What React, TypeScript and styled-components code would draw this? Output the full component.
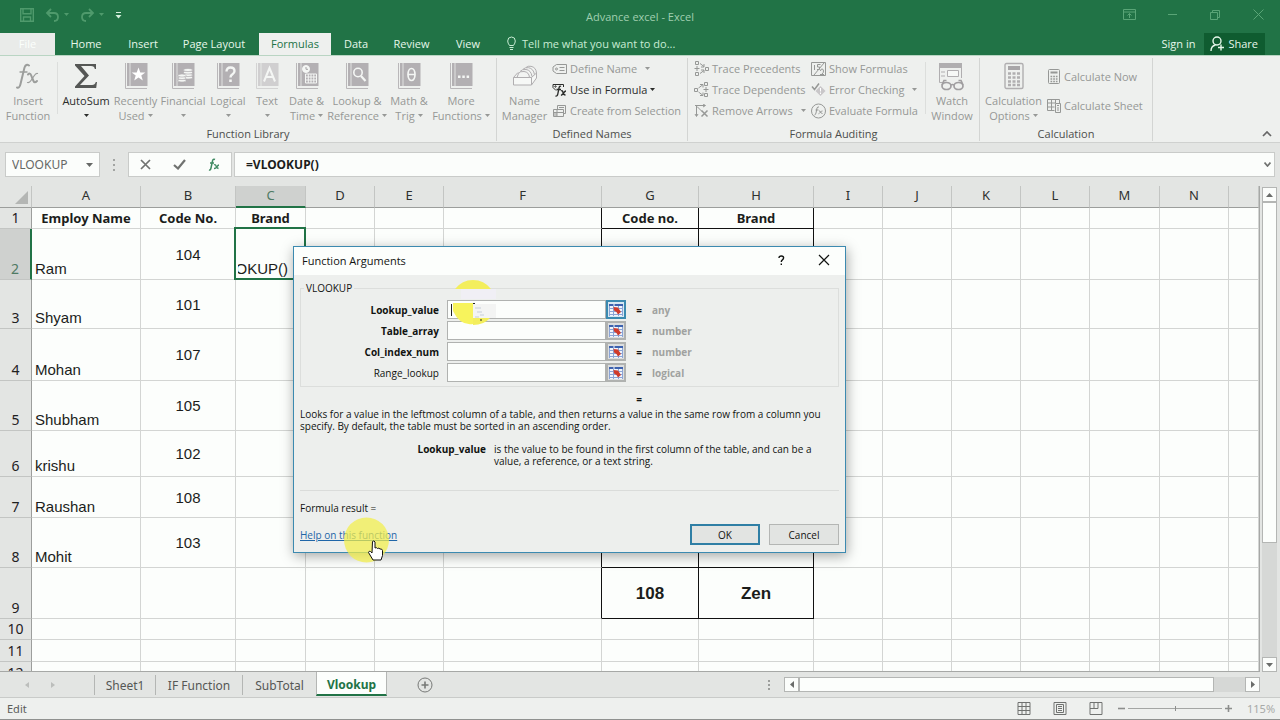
import React from "react";
import styled, { createGlobalStyle, css } from "styled-components";

const UI = `"Noto Sans", "Open Sans", sans-serif`;
const CHROME = `"Open Sans", "Noto Sans", sans-serif`;
const CELL = `"Liberation Sans", Arial, sans-serif`;
const GREEN = "#217346";

const GlobalStyle = createGlobalStyle`
  * { box-sizing: border-box; }
  body { margin: 0; font-family: ${UI}; font-size: 12px; color: #333; }
  button, input, select { font: inherit; color: inherit; margin: 0; padding: 0; border: 0; background: none; border-radius: 0; }
  svg { display: block; flex: none; }
`;

const Window = styled.div`
  position: relative;
  display: flex;
  flex-direction: column;
  height: 100vh;
  overflow: hidden;
  background: #e3e5e3;
`;

/* ---------- title bar ---------- */

const TitleBar = styled.header`
  display: grid;
  grid-template-columns: 1fr auto 1fr;
  align-items: center;
  height: 33px;
  flex: none;
  background: ${GREEN};
  color: #a0cfb0;
`;

const QuickAccess = styled.div`
  display: flex;
  align-items: center;
  gap: 4px;
  padding: 0 0 4px 20px;
  color: #4f9a6c;
`;

const DocTitle = styled.h1`
  margin: 0;
  font-family: ${CHROME};
  font-size: 11px;
  font-weight: 400;
`;

const IconButton = styled.button`
  display: flex;
  align-items: center;
  justify-content: center;
`;

const SpacedIconButton = styled(IconButton)<{ $bright?: boolean }>`
  margin-left: 7px;
  ${(p) => p.$bright && css`color: #d5f0dd;`}
`;

const WindowControls = styled.div`
  display: flex;
  justify-content: flex-end;
  align-items: center;
  gap: 29px;
  padding: 0 15px 4px 0;
  color: #5aa577;

  button { width: 14px; }
`;

/* ---------- ribbon tabs ---------- */

const TabRow = styled.nav`
  display: flex;
  align-items: stretch;
  height: 22px;
  flex: none;
  background: ${GREEN};
  font-family: ${CHROME};
  font-size: 11px;
  color: #e6f7ea;

  button { padding-bottom: 2px; }
`;

const RibbonTab = styled.button<{ $w: number; $kind?: "file" | "active" }>`
  width: ${(p) => p.$w}px;
  white-space: nowrap;
  ${(p) => p.$kind === "file" && css`background: #e9ebe9; color: #fbfffc;`}
  ${(p) => p.$kind === "active" && css`background: #eef0ee; color: ${GREEN};`}
`;

const TellMe = styled.button`
  display: flex;
  align-items: center;
  gap: 6px;
  padding-left: 13px;
  color: #c9ecd4;
`;

const Account = styled.div`
  display: flex;
  margin-left: auto;
  padding-right: 15px;
  gap: 9px;
`;

const ShareButton = styled.button`
  display: flex;
  align-items: center;
  gap: 3px;
  padding: 0 7px 0 6px;
  background: #0f5c30;
`;

/* ---------- ribbon ---------- */

const Ribbon = styled.section`
  position: relative;
  display: flex;
  height: 88px;
  flex: none;
  padding: 2px 0 1px;
  background: #eef0ee;
  border-top: 1px solid #b9d5c3;
  border-bottom: 1px solid #cfd1cf;
  font-family: ${CHROME};
  font-size: 11px;
`;

const Group = styled.div<{ $w: number }>`
  display: flex;
  flex-direction: column;
  width: ${(p) => p.$w}px;
  border-right: 1px solid #d3d5d3;
`;

const GroupBody = styled.div`
  display: flex;
  flex: none;
  height: 68px;
`;

const GroupCaption = styled.div`
  text-align: center;
  line-height: 15px;
  color: #4c4e4c;
`;

const Divider = styled.span`
  width: 1px;
  height: 52px;
  margin: 4px 2px 0 1px;
  background: #dcdedc;
`;

const BigTool = styled.button<{ $w: number; $on?: boolean }>`
  display: flex;
  flex-direction: column;
  align-items: center;
  width: ${(p) => p.$w}px;
  padding-top: 3px;
  line-height: 15px;
  white-space: nowrap;
  color: ${(p) => (p.$on ? "#2b2d2b" : "#969896")};
`;

const BigIcon = styled.span`
  display: flex;
  align-items: center;
  justify-content: center;
  height: 30px;
  margin-bottom: 2px;
`;

const ToolLine = styled.span`
  display: flex;
  align-items: center;
  gap: 3px;
  height: 15px;
`;

const ToolColumn = styled.div<{ $w: number; $top?: number; $left?: number }>`
  display: flex;
  flex-direction: column;
  width: ${(p) => p.$w}px;
  padding: ${(p) => p.$top ?? 0}px 0 0 ${(p) => p.$left ?? 0}px;
`;

const SmallTool = styled.button<{ $h?: number; $on?: boolean }>`
  display: flex;
  align-items: center;
  gap: 3px;
  height: ${(p) => p.$h ?? 21}px;
  white-space: nowrap;
  color: ${(p) => (p.$on ? "#2b2d2b" : "#969896")};
`;

const CaretSlot = styled.span<{ $wide?: boolean }>`
  margin-left: ${(p) => (p.$wide ? 5 : 0)}px;
`;

const CollapseButton = styled(IconButton)`
  margin: auto 8px 4px auto;
  color: #666;
`;

/* ---------- formula bar ---------- */

const FormulaBar = styled.section`
  display: flex;
  align-items: flex-start;
  height: 43px;
  flex: none;
  padding: 9px 5px 0;
`;

const NameBox = styled.label`
  display: flex;
  align-items: center;
  width: 95px;
  height: 25px;
  padding: 0 6px;
  background: #fbfdfb;
  border: 1px solid #c9cbc9;
  color: #666866;

  select { appearance: none; width: 78px; outline: 0; }
`;

const Grip = styled.span`
  width: 28px;
  height: 25px;
  display: flex;
  align-items: center;
  justify-content: center;
  color: #a2a4a2;
`;

const EntryTools = styled.div`
  display: flex;
  align-items: center;
  justify-content: space-around;
  width: 104px;
  height: 25px;
  background: #fbfdfb;
  border: 1px solid #c9cbc9;
  color: #707270;
`;

const FxButton = styled(IconButton)`
  color: #3f8a62;
`;

const FormulaField = styled.label`
  display: flex;
  align-items: center;
  flex: 1;
  height: 25px;
  margin-left: 2px;
  padding: 0 3px 0 11px;
  background: #fbfdfb;
  border: 1px solid #c9cbc9;
  color: #707270;

  input { flex: 1; outline: 0; font-weight: 700; color: #1b1d1b; }
`;

/* ---------- sheet ---------- */

const SheetArea = styled.main`
  display: flex;
  flex: 1;
  min-height: 0;
`;

const GridViewport = styled.div`
  flex: 1;
  min-width: 0;
  overflow: hidden;
  border-right: 1px solid #a6a8a6;
  border-bottom: 1px solid #a6a8a6;
`;

const Grid = styled.table`
  width: 100%;
  table-layout: fixed;
  border-collapse: separate;
  border-spacing: 0;
  background: #fcfefc;

  th, td { padding: 0; }
`;

const ColHead = styled.th<{ $on?: boolean }>`
  height: 22px;
  font-size: 13px;
  line-height: 19px;
  font-weight: 400;
  vertical-align: top;
  color: ${(p) => (p.$on ? "#4f7a64" : "#2f312f")};
  background: ${(p) => (p.$on ? "#cfd1cf" : "#e3e5e3")};
  border-right: 1px solid #c3c5c3;
  border-bottom: ${(p) => (p.$on ? `2px solid ${GREEN}` : "1px solid #9c9e9c")};
`;

const Corner = styled(ColHead)`
  svg { margin: 5px 3px 0 auto; }
`;

const RowHead = styled.th<{ $on?: boolean }>`
  font-size: 14px;
  line-height: 20px;
  font-weight: 400;
  vertical-align: bottom;
  color: ${(p) => (p.$on ? "#4f7a64" : "#1f211f")};
  background: ${(p) => (p.$on ? "#cfd1cf" : "#e3e5e3")};
  border-right: ${(p) => (p.$on ? `2px solid ${GREEN}` : "1px solid #9c9e9c")};
  border-bottom: 1px solid #c3c5c3;
`;

type CellKind = "name" | "code" | "head" | "big";

const Cell = styled.td<{ $kind?: CellKind; $rb?: boolean; $bb?: boolean }>`
  font-family: ${CELL};
  font-size: 15px;
  line-height: 17px;
  color: #1b1d1b;
  white-space: nowrap;
  border-right: 1px solid ${(p) => (p.$rb ? "#111" : "#d3d5d3")};
  border-bottom: 1px solid ${(p) => (p.$bb ? "#111" : "#d3d5d3")};
  ${(p) => p.$kind === "name" && css`&& { padding: 0 0 2px 3px; } vertical-align: bottom;`}
  ${(p) => p.$kind === "code" && css`text-align: center; vertical-align: middle;`}
  ${(p) => p.$kind === "big" && css`text-align: center; font-size: 17px; font-weight: 700;`}
  ${(p) => p.$kind === "head" && css`
    text-align: center; font-family: ${UI}; font-size: 13px; font-weight: 700;
  `}
`;

const ActiveCell = styled(Cell)`
  position: relative;
  vertical-align: bottom;

  &::after {
    content: "";
    position: absolute;
    inset: -2px -1px -1px -2px;
    border: 2px solid ${GREEN};
  }
`;

const EditText = styled.div`
  display: flex;
  justify-content: flex-end;
  overflow: hidden;
  margin: 0 17px 2px 2px;
`;

const VScroll = styled.div`
  display: flex;
  flex-direction: column;
  width: 20px;
  padding: 1px 3px 0 2px;
`;

const ScrollArrow = styled.button`
  display: flex;
  align-items: center;
  justify-content: center;
  width: 15px;
  height: 15px;
  flex: none;
  background: #fbfdfb;
  border: 1px solid #b4b6b4;
  color: #6a6c6a;
`;

const VTrack = styled.div`
  flex: 1;
  width: 15px;
  background: #d6d8d6;
`;

const VThumb = styled.div`
  height: 75%;
  background: #fcfefc;
  border: 1px solid #b4b6b4;
`;

/* ---------- sheet tabs ---------- */

const SheetBar = styled.nav`
  display: flex;
  height: 26px;
  flex: none;
  border-bottom: 1px solid #c9cbc9;
  color: #555755;
`;

const SheetNav = styled.div`
  display: flex;
  align-items: center;
  gap: 22px;
  width: 94px;
  padding-left: 25px;
  color: #bcbebc;
`;

const SheetTab = styled.button<{ $w: number; $on?: boolean }>`
  width: ${(p) => p.$w}px;
  height: 20px;
  margin-top: 3px;
  border-left: 1px solid #b4b6b4;
  ${(p) => p.$on && css`
    height: 24px;
    margin-top: 0;
    padding-top: 2px;
    background: #fcfefc;
    border-right: 1px solid #b4b6b4;
    border-bottom: 2px solid ${GREEN};
    font-weight: 700;
    color: ${GREEN};
  `}
`;

const AddSheet = styled(IconButton)`
  margin-left: 30px;
  color: #777977;
`;

const HScroll = styled.div`
  display: flex;
  align-items: center;
  width: 40%;
  margin-left: auto;
  padding-right: 20px;
`;

const HTrack = styled.div`
  flex: 1;
  height: 15px;
  background: #d6d8d6;
`;

const HThumb = styled.div`
  width: 93%;
  height: 15px;
  background: #fcfefc;
  border: 1px solid #b4b6b4;
`;

/* ---------- status bar ---------- */

const StatusBar = styled.footer`
  display: flex;
  align-items: center;
  height: 22px;
  flex: none;
  padding: 0 5px 0 7px;
  background: #eef0ee;
  border-bottom: 1px solid #8f918f;
  font-size: 11px;
  color: #5a5c5a;
`;

const ViewButtons = styled.div`
  display: flex;
  gap: 22px;
  margin: 0 15px 0 auto;
  color: #707270;
`;

const Zoom = styled.div`
  display: flex;
  align-items: center;
  gap: 3px;
  color: #8c8e8c;

  output { width: 28px; margin-left: 12px; color: #a8aaa8; }
`;

const ZoomRange = styled.input`
  appearance: none;
  width: 94px;
  height: 9px;
  background: linear-gradient(#a4a6a4, #a4a6a4) center / 100% 1px no-repeat;

  &::-webkit-slider-thumb { appearance: none; width: 1px; height: 5px; background: #8c8e8c; }
`;

/* ---------- dialog ---------- */

const Dialog = styled.form`
  position: absolute;
  top: 246px;
  left: 293px;
  width: 553px;
  background: #edefed;
  border: 1px solid #3c8ab0;
  box-shadow: 1px 3px 12px rgba(0, 0, 0, 0.35);
  font-family: ${CHROME};
  font-size: 10px;
  color: #111311;
`;

const DialogTitle = styled.div`
  display: flex;
  align-items: center;
  height: 28px;
  padding: 0 15px 2px 8px;
  background: #fcfefc;
  gap: 33px;

  h2 { margin: 0 auto 0 0; font-size: 11px; font-weight: 400; }
`;

const DialogBody = styled.div`
  padding: 6px 6px 7px;
`;

const Args = styled.fieldset`
  display: grid;
  gap: 2px;
  margin: 0;
  padding: 5px 0 4px;
  border: 1px solid #dcdedc;

  legend { margin-left: 3px; padding: 0 2px; line-height: 14px; }
`;

const ArgRow = styled.div<{ $optional?: boolean }>`
  display: grid;
  grid-template-columns: 138px 8px 159px 20px 26px 1fr;
  align-items: center;
  height: 19px;

  label { text-align: right; font-weight: ${(p) => (p.$optional ? 400 : 700)}; }
`;

const ArgInput = styled.input`
  grid-column: 3;
  height: 19px;
  padding: 0 3px;
  background: #fcfefc;
  border: 1px solid #b0b2b0;
  outline: 0;
`;

const PickButton = styled.button<{ $on?: boolean }>`
  display: flex;
  align-items: center;
  justify-content: center;
  height: 19px;
  background: ${(p) => (p.$on ? "#d8e8f2" : "#dcdedf")};
  border: ${(p) => (p.$on ? "2px solid #3c8ab0" : "2px solid #b0b2b0")};
`;

const Equals = styled.span`
  text-align: center;
  font-weight: 700;
`;

const ArgType = styled.span`
  font-weight: 700;
  color: #a0a2a0;
`;

const ResultRow = styled.div`
  display: grid;
  grid-template-columns: 326px 26px 1fr;
  height: 21px;
  padding-top: 2px;
  align-items: center;
`;

const Description = styled.p`
  margin: 0;
  line-height: 12px;
`;

const ArgHelp = styled.dl`
  display: grid;
  grid-template-columns: 186px 340px;
  gap: 8px;
  margin: 11px 0 0;
  padding-bottom: 23px;
  border-bottom: 1px solid #dadcda;
  line-height: 12px;

  dt { text-align: right; font-weight: 700; }
  dd { margin: 0; }
`;

const FormulaResult = styled.div`
  padding-top: 9px;
  line-height: 16px;
`;

const DialogFooter = styled.div`
  display: flex;
  align-items: center;
  gap: 9px;
  margin-top: 8px;

  a { margin-right: auto; color: #1f66a8; }
`;

const DialogButton = styled.button<{ $primary?: boolean }>`
  width: 70px;
  height: 21px;
  background: #e2e4e2;
  border: ${(p) => (p.$primary ? "2px solid #2f7fa5" : "1px solid #b4b6b4")};
`;

const Pointer = styled.div<{ $x: number; $y: number }>`
  position: absolute;
  left: ${(p) => p.$x}px;
  top: ${(p) => p.$y}px;
  pointer-events: none;
`;

/* ---------- drawings ---------- */

type SvgProps = { w: number; h: number; children: React.ReactNode; stroke?: number };
const Svg = ({ w, h, children, stroke = 1 }: SvgProps) => (
  <svg width={w} height={h} viewBox={`0 0 ${w} ${h}`} fill="none" stroke="currentColor" strokeWidth={stroke} aria-hidden="true">
    {children}
  </svg>
);

const Caret = () => (
  <Svg w={5} h={3}><path d="M0 0h5L2.5 3z" fill="currentColor" stroke="none" /></Svg>
);

const Book = ({ children, pale }: { children: React.ReactNode; pale?: boolean }) => (
  <Svg w={24} h={28}>
    <g opacity={pale ? 0.5 : 1}>
      <path d="M1.500 1v25.500M1.500 26.500H23" stroke="#b9b7b9" />
      <path d="M3 1h20.500v23H3z" fill="#b3b0b3" stroke="none" />
      <path d="M6 1v23" stroke="#eef0ee" strokeWidth={0.8} />
    </g>
    <g stroke="#f4f6f4">{children}</g>
  </Svg>
);

const bigIcons = {
  fx: (
    <Svg w={24} h={28}>
      <g stroke="#9c9e9c" strokeLinecap="round">
        <path d="M13 3.500q-3-2-4.500 2L4.500 22q-1 4.500-3.500 3.500" strokeWidth={2} />
        <path d="M4 10h7" strokeWidth={1.400} />
        <path d="M12 12.500q2-2 3 .5l2.500 6q1 2.500 3.500 0" strokeWidth={2} />
        <path d="M21.500 11.500q-1.500-.5-3.500 2.500l-3 4.500q-1.500 2.500-3.500 2" strokeWidth={1.200} />
      </g>
    </Svg>
  ),
  sum: (
    <Svg w={24} h={28}>
      <path d="M1 2h21v5h-1.200Q20.500 4 17 4H7l8 9.500L6 23h12q3 0 3.800-3H23l-.8 6H1v-1.500l9.500-10.500L1 3.500z" fill="#555755" stroke="none" />
    </Svg>
  ),
  recent: (
    <Book><path d="M14.500 5.500l1.800 5h5l-4 3 1.500 5-4.300-3-4.300 3 1.500-5-4-3h5z" fill="#fff" stroke="none" /></Book>
  ),
  financial: (
    <Book>
      <g fill="#f4f6f4" stroke="#b3b0b3" strokeWidth={0.7}>
        <ellipse cx="17" cy="15.500" rx="4.500" ry="1.600" /><ellipse cx="17" cy="13" rx="4.500" ry="1.600" />
        <ellipse cx="17" cy="10.500" rx="4.500" ry="1.600" /><ellipse cx="17" cy="8" rx="4.500" ry="1.600" />
        <ellipse cx="11" cy="18.500" rx="4" ry="1.600" /><ellipse cx="11" cy="16" rx="4" ry="1.600" />
        <ellipse cx="11" cy="13.500" rx="4" ry="1.600" />
      </g>
    </Book>
  ),
  logical: (
    <Book>
      <path d="M10.500 9.500q0-4 4-4t4 3.500q0 2-2 3.200t-2 3.300" strokeWidth={2.400} />
      <path d="M13.200 17.500h2.600v2.500h-2.600z" fill="#f4f6f4" stroke="none" />
    </Book>
  ),
  text: (
    <Book pale><path d="M9 19.500l5.500-13.500 5.500 13.500M11 15h7" strokeWidth={2} /></Book>
  ),
  date: (
    <Book>
      <circle cx="11" cy="7" r="3.500" fill="#f4f6f4" />
      <path d="M11 5v2.300h2" stroke="#a5a3a5" />
      <path d="M10.500 12h11v9h-11zM10.500 15h11M10.500 18h11M13.300 12v9M16 12v9M18.800 12v9" />
    </Book>
  ),
  lookup: (
    <Book>
      <circle cx="13" cy="10.500" r="4.200" strokeWidth={1.600} />
      <path d="M16 14l4.500 5" strokeWidth={2.200} />
    </Book>
  ),
  math: (
    <Book>
      <ellipse cx="14.500" cy="12.500" rx="3.500" ry="6" strokeWidth={1.700} />
      <path d="M11 12.500h7" strokeWidth={1.500} />
    </Book>
  ),
  more: (
    <Book><path d="M9 13.500h2.500v2.500H9zM13.300 13.500h2.500v2.500h-2.500zM17.600 13.500h2.500v2.500h-2.500z" fill="#f4f6f4" stroke="none" /></Book>
  ),
  names: (
    <Svg w={26} h={22}>
      <g stroke="#b0aeb0" strokeLinejoin="round">
        <path d="M1.500 12.500v7.500h18v-7.500zM1.500 12.500l4-4.500h3M19.500 12.500l5-4.500v5l-5 7" fill="#f6f8f6" />
        <path d="M5 12.500l1.500-4Q8 6 12 6.500q5 .5 5.500 6zM8 6.500Q10 4 14 4.500q5 .5 6 7M11 4.300Q13 2.200 16.500 2.700q5 .8 6 7M14 2.500Q16 .7 19 1.300q5 1 5.500 6.700" fill="#f2f4f2" />
      </g>
    </Svg>
  ),
  watch: (
    <Svg w={28} h={30}>
      <path d="M1 2h23v5H1z" fill="#b0aeb0" stroke="none" />
      <g stroke="#b0aeb0">
        <path d="M1.500 7v14.500h4M23.500 7v10M3 11h4M3 15h4" />
        <path d="M9.500 9.500h11v6h-11z" fill="#f6f8f6" />
      </g>
      <g stroke="#a09ea0" strokeWidth={1.700}>
        <ellipse cx="8.500" cy="25" rx="4.500" ry="3.500" fill="#eef0ee" /><ellipse cx="20.500" cy="25" rx="4.500" ry="3.500" fill="#eef0ee" />
        <path d="M13 24q1.500-1 3 0M4 24l2-4.500h2.500M25 24l-2-4.500h-2.500" />
      </g>
    </Svg>
  ),
  calc: (
    <Svg w={20} h={28}>
      <rect x="1" y="1.500" width="18" height="25" rx="1.500" stroke="#b0aeb0" strokeWidth={1.400} />
      <path d="M4 4h12v4H4z" fill="#a8a6a8" stroke="none" />
      <path d="M4 11.500h12M4 15.500h12M4 19.500h12M4 23h12" stroke="#b0aeb0" strokeWidth={2.500} strokeDasharray="3 1.500" />
    </Svg>
  ),
};

const smallIcons = {
  define: <Svg w={15} h={14}><path d="M4.500 2.500h10v9h-10L1 9V5z" /><circle cx="4.500" cy="7" r="1" /><path d="M7.500 5.500h5M7.500 8.500h5" /></Svg>,
  use: (
    <Svg w={15} h={14}>
      <path d="M4 7.500L1 4.500v-3h10.500v2.500" />
      <circle cx="3.500" cy="3.500" r=".7" />
      <path d="M9 3.500Q7.500 2.500 7 5l-1.200 6q-.5 2.500-2.300 2M4.500 6.500h4.500" strokeWidth={1.300} />
      <path d="M9 8q1.500-1 2 1.500t2.500 2.500M14 8q-1 0-2.500 2T9 12.500" strokeWidth={1.300} />
    </Svg>
  ),
  create: <Svg w={15} h={14}><path d="M1.500 5.500h10v7h-10zM1.500 8.500h10M5 5.500v7M5.500 5.500v-4h8v8h-2M7 3.500h5" /><path d="M2 9h3v3H2z" fill="currentColor" stroke="none" opacity=".5" /></Svg>,
  precedents: (
    <Svg w={15} h={15}>
      <path d="M1.500.5h3v3h-3zM1.500 11.500h3v3h-3zM11.500 6.500h3v3h-3zM.5 7.500h5M3 5v5M6 2.500l4 3M6 12.500l4-3" />
      <path d="M10 3v3H7M10 12V9H7" />
    </Svg>
  ),
  dependents: (
    <Svg w={15} h={15}>
      <path d="M.5 6.500h3v3h-3zM10.500.5h3v3h-3zM10.500 11.500h3v3h-3zM9.500 7.500h5M12 5v5M4.500 6l4-3M4.500 10l4 3" />
      <path d="M6 2.500h3v3M6 13.500h3v-3" />
    </Svg>
  ),
  remove: <Svg w={15} h={14}><path d="M1 1.500h10M9 0l2.500 1.500L9 3M2.500 2v10M1 10l1.500 2.500L4 10M3 2.500l5 5" /><path d="M7.500 6.500l6 6M13.500 6.500l-6 6" strokeWidth={1.500} /></Svg>,
  show: <Svg w={15} h={14}><path d="M.5.5h14v13H.5zM3.500 3v5M9.500 2.500h-3v2.500h2v2.500h-2.500M13 1L3 13M9.500 9q0-2 1.500-2t1.500 2-1.500 3M9 12.500h4" /></Svg>,
  error: <Svg w={15} h={14}><path d="M1 3.500l2.500 3L8 .5" strokeWidth={1.500} /><path d="M9.500 3l5 5-5 5-5-5z" fill="#c9c7c9" stroke="none" /><path d="M9.500 5v3.500M9.500 9.500v1.500" stroke="#fff" /></Svg>,
  evaluate: (
    <Svg w={15} h={16}>
      <circle cx="7.500" cy="8" r="7" />
      <path d="M3.500 12q1 0 1.500-2l1-5Q6.500 3.500 8 4M4.500 7h3M8 8q1-.5 1.500 1t2 1.500M11.500 8q-1 0-2 1.200t-2 1.600" />
    </Svg>
  ),
  now: <Svg w={14} h={16}><rect x="1.500" y=".5" width="11" height="14" rx="1" /><path d="M3.500 3.500h7" strokeWidth={2} /><path d="M3.500 7.500h7M3.500 10h7M3.500 12.500h7" strokeWidth={1.500} strokeDasharray="1.700 1" /></Svg>,
  sheet: <Svg w={14} h={15}><path d="M.5 1.500h12v4M.5 1.500v11h7M.5 5h8M.5 9h7M4.500 1.500v11M8.500 1.500V5" /><path d="M8.500 5.500h5v9h-5zM10 7.500h2M10 10h2M10 12h2" /></Svg>,
};

const RangeIcon = () => (
  <Svg w={14} h={12}>
    <path d="M0 0h14v12H0z" fill="#f1f5fb" stroke="none" />
    <path d="M0 1h4.500M5.500 1H14" stroke="#3d62ae" strokeWidth={2} />
    <path d="M0 4.500h14M0 7.500h14M0 10.500h14M.5 2v10M4.500 2v10M9.500 2v10M13.500 2v10" stroke="#8aa4d6" />
    <path d="M4.500 3l4.500.5L12 8l-3 2.500L7.500 8 5 6.500z" fill="#cf3b2c" stroke="none" />
  </Svg>
);

/* ---------- data ---------- */

type Big = { icon: keyof typeof bigIcons; w: number; a: string; b?: string; caret?: boolean; on?: boolean };
const library: Big[] = [
  { icon: "sum", w: 52, a: "AutoSum", caret: true, on: true },
  { icon: "recent", w: 47, a: "Recently", b: "Used", caret: true },
  { icon: "financial", w: 48, a: "Financial", caret: true },
  { icon: "logical", w: 42, a: "Logical", caret: true },
  { icon: "text", w: 36, a: "Text", caret: true },
  { icon: "date", w: 43, a: "Date &", b: "Time", caret: true },
  { icon: "lookup", w: 58, a: "Lookup &", b: "Reference", caret: true },
  { icon: "math", w: 46, a: "Math &", b: "Trig", caret: true },
  { icon: "more", w: 58, a: "More", b: "Functions", caret: true },
];

const columns: [string, number | undefined][] = [
  ["A", 109], ["B", 95], ["C", 70], ["D", 69], ["E", 69], ["F", 158], ["G", 97], ["H", 115],
  ["I", 69], ["J", 69], ["K", 69], ["L", 69], ["M", 70], ["N", 69], ["", undefined],
];

type Row = { h: number; cells?: Record<string, string>; head?: boolean };
const rows: Row[] = [
  { h: 21, head: true, cells: { A: "Employ Name", B: "Code No.", C: "Brand", G: "Code no.", H: "Brand" } },
  { h: 51, cells: { A: "Ram", B: "104", C: "=VLOOKUP()" } },
  { h: 49, cells: { A: "Shyam", B: "101" } },
  { h: 52, cells: { A: "Mohan", B: "107" } },
  { h: 50, cells: { A: "Shubham", B: "105" } },
  { h: 46, cells: { A: "krishu", B: "102" } },
  { h: 41, cells: { A: "Raushan", B: "108" } },
  { h: 50, cells: { A: "Mohit", B: "103" } },
  { h: 51, cells: { G: "108", H: "Zen" } },
  { h: 21 },
  { h: 22 },
  { h: 22 },
];

const args = [
  { name: "Lookup_value", type: "any" },
  { name: "Table_array", type: "number" },
  { name: "Col_index_num", type: "number" },
  { name: "Range_lookup", type: "logical", optional: true },
];

const kindOf = (col: string, head?: boolean): CellKind => {
  if (head) return "head";
  if (col === "A") return "name";
  return col === "B" ? "code" : "big";
};

const BigButton = ({ icon, w, a, b, caret, on }: Big) => (
  <BigTool type="button" $w={w} $on={on}>
    <BigIcon>{bigIcons[icon]}</BigIcon>
    <ToolLine>{a}</ToolLine>
    <ToolLine>{b}{caret && <Caret />}</ToolLine>
  </BigTool>
);

type Small = { icon: keyof typeof smallIcons; label: string; caret?: "near" | "wide"; on?: boolean; h?: number };
const SmallButton = ({ icon, label, caret, on, h }: Small) => (
  <SmallTool type="button" $on={on} $h={h}>
    {smallIcons[icon]}{label}
    {caret && <CaretSlot $wide={caret === "wide"}><Caret /></CaretSlot>}
  </SmallTool>
);

export default function App() {
  return (
    <Window>
      <GlobalStyle />
      <TitleBar>
        <QuickAccess>
          <IconButton aria-label="Save"><Svg w={14} h={14}><path d="M.7.7h12.600v12.600H.7zM3 .7v5h8v-5M3.500 13.300V9h7v4.300" strokeWidth={1.400} /></Svg></IconButton>
          <SpacedIconButton aria-label="Undo"><Svg w={15} h={14}><path d="M6 1L2 5l4 4M2 5h7q4 0 4 4t-4 4" strokeWidth={1.800} /></Svg></SpacedIconButton>
          <Caret />
          <SpacedIconButton aria-label="Redo"><Svg w={15} h={14}><path d="M9 1l4 4-4 4M13 5H6Q2 5 2 9t4 4" strokeWidth={1.800} /></Svg></SpacedIconButton>
          <Caret />
          <SpacedIconButton aria-label="Customize Quick Access Toolbar" $bright><Svg w={7} h={8}><path d="M1 1.500h5" /><path d="M.5 4h6l-3 3.500z" fill="currentColor" stroke="none" /></Svg></SpacedIconButton>
        </QuickAccess>
        <DocTitle>Advance excel - Excel</DocTitle>
        <WindowControls>
          <IconButton aria-label="Ribbon Display Options"><Svg w={13} h={11}><path d="M.5.5h12v10H.5zM.5 3h12M6.500 9V4.500M4.500 6.500l2-2 2 2" /></Svg></IconButton>
          <IconButton aria-label="Minimize"><Svg w={11} h={11}><path d="M1 5.500h9" /></Svg></IconButton>
          <IconButton aria-label="Restore"><Svg w={10} h={10}><path d="M.5 2.500h7v7h-7zM2.500 2.500v-2h7v7h-2" /></Svg></IconButton>
          <IconButton aria-label="Close"><Svg w={11} h={11}><path d="M.5.5l10 10M10.500.5l-10 10" /></Svg></IconButton>
        </WindowControls>
      </TitleBar>

      <TabRow>
        <RibbonTab $w={55} $kind="file">File</RibbonTab>
        <RibbonTab $w={62}>Home</RibbonTab>
        <RibbonTab $w={52}>Insert</RibbonTab>
        <RibbonTab $w={90}>Page Layout</RibbonTab>
        <RibbonTab $w={72} $kind="active">Formulas</RibbonTab>
        <RibbonTab $w={50}>Data</RibbonTab>
        <RibbonTab $w={61}>Review</RibbonTab>
        <RibbonTab $w={52}>View</RibbonTab>
        <TellMe>
          <Svg w={9} h={14}><path d="M2.500 9.500Q.7 7 .7 5q0-4 3.800-4t3.800 4q0 2-1.800 4.500zM2.500 11.500h4M3 13.500h3" /></Svg>
          Tell me what you want to do...
        </TellMe>
        <Account>
          <button>Sign in</button>
          <ShareButton>
            <Svg w={15} h={15}><circle cx="7" cy="5" r="4" strokeWidth={1.400} /><path d="M1 15q0-5 4.500-6M11 8.500v6M8 11.500h6" strokeWidth={1.400} /></Svg>
            Share
          </ShareButton>
        </Account>
      </TabRow>

      <Ribbon>
        <Group $w={497}>
          <GroupBody>
            <BigButton icon="fx" w={56} a="Insert" b="Function" />
            <Divider />
            {library.map((t) => <BigButton key={t.a} {...t} />)}
          </GroupBody>
          <GroupCaption>Function Library</GroupCaption>
        </Group>
        <Group $w={191}>
          <GroupBody>
            <BigButton icon="names" w={55} a="Name" b="Manager" />
            <ToolColumn $w={130}>
              <SmallButton icon="define" label="Define Name" caret="wide" />
              <SmallButton icon="use" label="Use in Formula" caret="near" on />
              <SmallButton icon="create" label="Create from Selection" />
            </ToolColumn>
          </GroupBody>
          <GroupCaption>Defined Names</GroupCaption>
        </Group>
        <Group $w={292}>
          <GroupBody>
            <ToolColumn $w={123} $left={6}>
              <SmallButton icon="precedents" label="Trace Precedents" />
              <SmallButton icon="dependents" label="Trace Dependents" />
              <SmallButton icon="remove" label="Remove Arrows" caret="wide" />
            </ToolColumn>
            <ToolColumn $w={113}>
              <SmallButton icon="show" label="Show Formulas" />
              <SmallButton icon="error" label="Error Checking" caret="wide" />
              <SmallButton icon="evaluate" label="Evaluate Formula" />
            </ToolColumn>
            <Divider />
            <BigButton icon="watch" w={48} a="Watch" b="Window" />
          </GroupBody>
          <GroupCaption>Formula Auditing</GroupCaption>
        </Group>
        <Group $w={173}>
          <GroupBody>
            <BigButton icon="calc" w={67} a="Calculation" b="Options" caret />
            <ToolColumn $w={104} $top={4}>
              <SmallButton icon="now" label="Calculate Now" h={29} />
              <SmallButton icon="sheet" label="Calculate Sheet" h={29} />
            </ToolColumn>
          </GroupBody>
          <GroupCaption>Calculation</GroupCaption>
        </Group>
        <CollapseButton aria-label="Collapse the Ribbon"><Svg w={10} h={6}><path d="M1 5l4-4 4 4" strokeWidth={1.700} /></Svg></CollapseButton>
      </Ribbon>

      <FormulaBar>
        <NameBox>
          <select aria-label="Name Box"><option>VLOOKUP</option></select>
          <Svg w={7} h={4}><path d="M0 0h7L3.500 4z" fill="currentColor" stroke="none" /></Svg>
        </NameBox>
        <Grip><Svg w={2} h={12}><path d="M1 0v12" strokeWidth={2} strokeDasharray="2 3" /></Svg></Grip>
        <EntryTools>
          <IconButton aria-label="Cancel entry"><Svg w={11} h={11}><path d="M1 1l9 9M10 1l-9 9" strokeWidth={1.700} /></Svg></IconButton>
          <IconButton aria-label="Enter"><Svg w={13} h={11}><path d="M1 6l4 3.500L12 1" strokeWidth={2.200} /></Svg></IconButton>
          <FxButton aria-label="Insert Function">
            <Svg w={12} h={13}><path d="M1 12q1.500.5 2-2l1.500-7Q5 .5 7 1.500M2 5h4" strokeWidth={1.500} /><path d="M6 7q1.500-1 2 1t2.500 2.500M11 7q-1 0-2.200 1.800T6 10.500" strokeWidth={1.300} /></Svg>
          </FxButton>
        </EntryTools>
        <FormulaField>
          <input aria-label="Formula" defaultValue="=VLOOKUP()" />
          <Svg w={7} h={5}><path d="M.5.5l3 3.500 3-3.500" strokeWidth={1.700} /></Svg>
        </FormulaField>
      </FormulaBar>

      <SheetArea>
        <GridViewport>
          <Grid>
            <colgroup>
              <col width={32} />
              {columns.map(([name, w]) => <col key={name} width={w} />)}
            </colgroup>
            <thead>
              <tr>
                <Corner aria-label="Select all"><Svg w={13} h={13}><path d="M13 0v13H0z" fill="#b4b6b4" stroke="none" /></Svg></Corner>
                {columns.map(([name]) => <ColHead key={name} $on={name === "C"}>{name}</ColHead>)}
              </tr>
            </thead>
            <tbody>
              {rows.map((row, r) => (
                <tr key={r} style={{ height: row.h }}>
                  <RowHead scope="row" $on={r === 1}>{r + 1}</RowHead>
                  {columns.map(([col]) => {
                    const text = row.cells?.[col];
                    if (r === 1 && col === "C") {
                      return <ActiveCell key={col}><EditText>{text}</EditText></ActiveCell>;
                    }
                    const boxed = r < 9;
                    const gh = col === "G" || col === "H";
                    return (
                      <Cell key={col} $kind={text ? kindOf(col, row.head) : undefined}
                        $rb={boxed && (gh || col === "F")} $bb={boxed && gh}>{text}</Cell>
                    );
                  })}
                </tr>
              ))}
            </tbody>
          </Grid>
        </GridViewport>
        <VScroll>
          <ScrollArrow aria-label="Scroll up"><Svg w={7} h={4}><path d="M0 4h7L3.500 0z" fill="currentColor" stroke="none" /></Svg></ScrollArrow>
          <VTrack><VThumb /></VTrack>
          <ScrollArrow aria-label="Scroll down"><Svg w={7} h={4}><path d="M0 0h7L3.500 4z" fill="currentColor" stroke="none" /></Svg></ScrollArrow>
        </VScroll>
      </SheetArea>

      <SheetBar>
        <SheetNav>
          <IconButton aria-label="Previous sheet"><Svg w={4} h={6}><path d="M4 0v6L0 3z" fill="currentColor" stroke="none" /></Svg></IconButton>
          <IconButton aria-label="Next sheet"><Svg w={4} h={6}><path d="M0 0v6l4-3z" fill="currentColor" stroke="none" /></Svg></IconButton>
        </SheetNav>
        <SheetTab $w={61}>Sheet1</SheetTab>
        <SheetTab $w={87}>IF Function</SheetTab>
        <SheetTab $w={74}>SubTotal</SheetTab>
        <SheetTab $w={71} $on>Vlookup</SheetTab>
        <AddSheet aria-label="New sheet"><Svg w={16} h={16}><circle cx="8" cy="8" r="7" /><path d="M8 4.500v7M4.500 8h7" strokeWidth={1.600} /></Svg></AddSheet>
        <HScroll>
          <Svg w={16} h={12}><path d="M1 1v12" strokeWidth={2} strokeDasharray="2 2" opacity=".5" /></Svg>
          <ScrollArrow aria-label="Scroll left"><Svg w={4} h={7}><path d="M4 0v7L0 3.500z" fill="currentColor" stroke="none" /></Svg></ScrollArrow>
          <HTrack><HThumb /></HTrack>
          <ScrollArrow aria-label="Scroll right"><Svg w={4} h={7}><path d="M0 0v7l4-3.500z" fill="currentColor" stroke="none" /></Svg></ScrollArrow>
        </HScroll>
      </SheetBar>

      <StatusBar>
        Edit
        <ViewButtons>
          <IconButton aria-label="Normal"><Svg w={14} h={13}><path d="M1 .5h12v12H1zM1 4.500h12M1 8.500h12M5 .5v12M9 .5v12" /></Svg></IconButton>
          <IconButton aria-label="Page Layout"><Svg w={14} h={13}><path d="M1 .5h12v12H1zM3.500 2.500h7v8h-7zM5 4.500h4M5 6.500h4M5 8.500h4" /></Svg></IconButton>
          <IconButton aria-label="Page Break Preview"><Svg w={14} h={13}><path d="M1 .5h12v12H1zM5 .5v6M1 6.500h8V.5" /></Svg></IconButton>
        </ViewButtons>
        <Zoom>
          <IconButton aria-label="Zoom out"><Svg w={7} h={7}><path d="M0 3.500h7" strokeWidth={1.600} /></Svg></IconButton>
          <ZoomRange type="range" aria-label="Zoom" />
          <IconButton aria-label="Zoom in"><Svg w={7} h={7}><path d="M0 3.500h7M3.500 0v7" strokeWidth={1.600} /></Svg></IconButton>
          <output>115%</output>
        </Zoom>
      </StatusBar>

      <Dialog aria-label="Function Arguments">
        <DialogTitle>
          <h2>Function Arguments</h2>
          <IconButton type="button" aria-label="Help">
            <Svg w={7} h={10}><path d="M1 3q0-2 2.300-2t2.300 1.800q0 1.200-1.200 2T3.300 7M3.300 8.500v1.500" strokeWidth={1.400} /></Svg>
          </IconButton>
          <IconButton type="button" aria-label="Close dialog"><Svg w={12} h={12}><path d="M1 1l10 10M11 1L1 11" strokeWidth={1.200} /></Svg></IconButton>
        </DialogTitle>
        <DialogBody>
          <Args>
            <legend>VLOOKUP</legend>
            {args.map((a, i) => (
              <ArgRow key={a.name} $optional={a.optional}>
                <label htmlFor={a.name}>{a.name}</label>
                <ArgInput id={a.name} />
                <PickButton type="button" aria-label={`Select range for ${a.name}`} $on={i === 0}><RangeIcon /></PickButton>
                <Equals>=</Equals>
                <ArgType>{a.type}</ArgType>
              </ArgRow>
            ))}
          </Args>
          <ResultRow><span /><Equals>=</Equals></ResultRow>
          <Description>
            Looks for a value in the leftmost column of a table, and then returns a value in the same row from a column you specify. By default, the table must be sorted in an ascending order.
          </Description>
          <ArgHelp>
            <dt>Lookup_value</dt>
            <dd>is the value to be found in the first column of the table, and can be a value, a reference, or a text string.</dd>
          </ArgHelp>
          <FormulaResult>Formula result =</FormulaResult>
          <DialogFooter>
            <a href="#help">Help on this function</a>
            <DialogButton type="button" $primary>OK</DialogButton>
            <DialogButton type="button">Cancel</DialogButton>
          </DialogFooter>
        </DialogBody>
      </Dialog>

      <Pointer $x={450} $y={279}>
        <Svg w={48} h={48}>
          <path d="M5 10Q12 1 23 1t18 9z" fill="#f3ee5c" stroke="none" />
          <path d="M11 10h35v10H11z" fill="#f1effa" stroke="none" opacity=".6" />
          <path d="M3 24h20v21Q10 47 3 32z" fill="#f7f35c" stroke="none" />
          <path d="M23 39h17q-6 7-17 7z" fill="#f3ee5c" stroke="none" />
          <path d="M23 25h23v14H23z" fill="#f3f4f3" stroke="none" />
          <path d="M25 29h6M27 33h5M30 36h4M25 38h4" stroke="#c5cdd8" />
          <path d="M23 24.500h2M30 41h2" stroke="#222" />
          <path d="M1.500 25v12" stroke="#222" />
        </Svg>
      </Pointer>
      <Pointer $x={343} $y={516}>
        <Svg w={48} h={48}>
          <circle cx="23.500" cy="24" r="22.500" fill="#f3ee4a" fillOpacity={0.72} stroke="none" />
          <path d="M29.500 25.500q1.500-1.500 2.500.5v6q1.500-1 2.500.5 1.500-1 2.500.5 2-.5 2.500 1.500v5l-1.500 4.500h-8l-4.500-7.500q.5-2 2-1l1.500 1.500z" fill="#fff" stroke="#111" strokeLinejoin="round" />
        </Svg>
      </Pointer>
    </Window>
  );
}
